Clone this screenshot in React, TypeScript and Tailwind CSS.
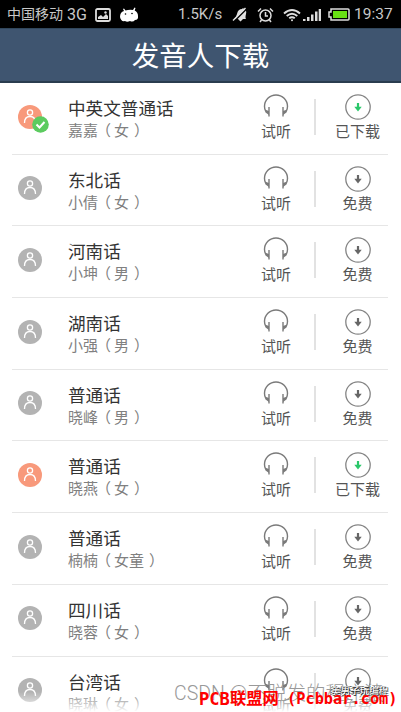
type Voice = {
  name: string
  speaker: string
  gender: string
  active?: boolean
  selected?: boolean
  downloaded?: boolean
}

const voices: Voice[] = [
  { name: '中英文普通话', speaker: '嘉嘉', gender: '女', active: true, selected: true, downloaded: true },
  { name: '东北话', speaker: '小倩', gender: '女' },
  { name: '河南话', speaker: '小坤', gender: '男' },
  { name: '湖南话', speaker: '小强', gender: '男' },
  { name: '普通话', speaker: '晓峰', gender: '男' },
  { name: '普通话', speaker: '晓燕', gender: '女', active: true, downloaded: true },
  { name: '普通话', speaker: '楠楠', gender: '女童' },
  { name: '四川话', speaker: '晓蓉', gender: '女' },
  { name: '台湾话', speaker: '晓琳', gender: '女' },
]

function StatusBar() {
  return (
    <div className="flex h-7 shrink-0 items-center bg-black pl-[7px] pr-2 pt-px text-[15px] text-[#c8c8c8]">
      <span className="flex w-[84px] items-center gap-1 whitespace-nowrap text-[14px]">
        中国移动 <span className="text-[16px]">3G</span>
      </span>
      <svg className="ml-1 h-[14px] w-4" viewBox="0 0 16 14" fill="none">
        <rect x="1" y="1" width="14" height="12" rx="1.5" stroke="#ddd" strokeWidth="1.8" />
        <path d="M3 11V9l3-2 2 2 3-3 2 2v3z" fill="#ddd" />
        <circle cx="10.5" cy="4.5" r="1.2" fill="#ddd" />
      </svg>
      <svg className="ml-2 h-4 w-5" viewBox="0 0 20 16">
        <path
          d="M1 10Q1 5 5 4L4 2l1-.500L6.500 3.500Q10 2.500 14 3L15.500.500l1 .500-.800 2.500Q19 5 19 9q.500 4-3 4-2 2.500-5 1-3 1.500-5 0-4 1-5-4z"
          fill="#fff"
        />
        <circle cx="6.500" cy="7" r=".8" fill="#000" />
        <circle cx="13" cy="6.500" r=".8" fill="#000" />
      </svg>
      <span className="ml-[39px] w-[46px] whitespace-nowrap">1.5K/s</span>
      <svg className="ml-[8px] h-[15px] w-4" viewBox="0 0 16 15">
        <path d="M2 12q2-1 3-5 1-5 5-5l1-1 1 1q3 1 2 5-1 4 0 5zM6 12h5l-2.500 2.500z" fill="#e0e0e0" />
        <path d="M2 14.500 15 1.500" stroke="#000" strokeWidth="1.500" />
        <path d="M1 13.500 13.500 1" stroke="#e0e0e0" strokeWidth="1.500" />
      </svg>
      <svg className="ml-[9px] h-4 w-[17px]" viewBox="0 0 17 16" fill="none" stroke="#ddd" strokeWidth="1.500">
        <circle cx="8.500" cy="8.500" r="5.500" />
        <path d="M8.500 5v4H11M1 4.500 4 1.500M16 4.500l-3-3M4.500 13 3 15M12.500 13l1.500 2" />
      </svg>
      <svg className="ml-[9px] h-[14px] w-[18px]" viewBox="0 0 18 14" fill="none" stroke="#ddd" strokeWidth="1.900">
        <path d="M1 5.500q8-7 16 0M3.700 8q5.300-4.500 10.600 0M6.200 10.300q2.800-2.300 5.600 0" />
        <circle cx="9" cy="12.300" r="1" fill="#ddd" stroke="none" />
      </svg>
      <svg className="ml-[2px] h-[14px] w-[18px]" viewBox="0 0 18 14" fill="#ddd">
        <path d="M0 11h2.500v2H0zM4 9h2.500v4H4zM8 6.500h2.500V13H8zM12 3.500h2.500V13H12zM15.700 1H18v12h-2.300z" />
      </svg>
      <svg className="ml-[7px] h-[13px] w-[22px]" viewBox="0 0 22 13">
        <path d="M3 1h17q1 0 1 1v9q0 1-1 1H3V9H1V4h2z" fill="none" stroke="#ddd" strokeWidth="1.500" />
        <path d="M5 3h14v7H5z" fill="#68df14" />
      </svg>
      <span className="ml-[4px] whitespace-nowrap text-[15.500px]">19:37</span>
    </div>
  )
}

function Avatar({ active, selected }: { active?: boolean; selected?: boolean }) {
  return (
    <div className="relative h-6 w-6">
      <svg className="h-6 w-6" viewBox="0 0 24 24" fill="none">
        <circle cx="12" cy="12" r="12" fill={active ? '#f8997b' : '#b3b3b3'} />
        <circle cx="12" cy="7.500" r="2.600" stroke="#fff" strokeWidth="1.300" />
        <path d="M6.500 18q0-6.500 5.500-6.500t5.500 6.500" stroke="#fff" strokeWidth="1.300" />
      </svg>
      {selected && (
        <svg className="absolute left-[14px] top-[11px] h-[17px] w-[17px]" viewBox="0 0 17 17">
          <circle cx="8.500" cy="8.500" r="8.300" fill="#5ccb5f" />
          <path d="m4.500 8.500 3 3 5-5.500" fill="none" stroke="#fff" strokeWidth="2" />
        </svg>
      )}
    </div>
  )
}

function HeadphonesIcon() {
  return (
    <svg className="h-[26px] w-[26px]" viewBox="0 0 26 26" fill="none" stroke="#7a7a7a" strokeWidth="1.400">
      <path d="M2.800 17.500Q1.500 15 1.500 12.500a11.500 11.500 0 0 1 23 0Q24.500 15 23.200 17.500" />
      <path d="M6 13v9.500M20 13v9.500" />
      <path d="M1.800 15.500 6 17v4L2.500 18.500zM24.200 15.500 20 17v4L23.500 18.500z" fill="#7a7a7a" stroke="none" />
    </svg>
  )
}

function DownloadIcon({ done }: { done?: boolean }) {
  const color = done ? '#2ac76a' : '#666'
  return (
    <svg className="h-[26px] w-[26px]" viewBox="0 0 26 26" fill="none">
      <circle cx="13" cy="13" r="12.200" stroke="#858585" strokeWidth="1.300" />
      <path d="M13 9v5" stroke={color} strokeWidth="2.200" />
      <path d="M9.300 12.800h7.400L13 17.500z" fill={color} />
    </svg>
  )
}

function VoiceRow({ voice }: { voice: Voice }) {
  return (
    <li className="ml-3 mr-[13px] flex h-[71.700px] shrink-0 border-b border-[#e6e6e6]">
      <div className="w-14 pl-[6px] pt-[21.500px]">
        <Avatar active={voice.active} selected={voice.selected} />
      </div>
      <div className="flex-1 pt-[14px]">
        <div className="text-[17.600px] leading-[24px] text-[#333]">{voice.name}</div>
        <div className="whitespace-nowrap text-[15px] leading-[20.500px] text-[#808080]">
          {voice.speaker}
          <span className="-ml-[2px] mr-[3px]">（</span>
          {voice.gender}
          <span className="ml-[5px]">）</span>
        </div>
      </div>
      <div className="flex w-[76px] flex-col items-center pt-[11px]">
        <HeadphonesIcon />
        <span className="pt-px text-[15px] leading-[22px] text-[#555]">试听</span>
      </div>
      <div className="mt-4 h-9 w-[2px] bg-[#e2e2e2]" />
      <div className="flex w-[72px] flex-col items-center pl-[11px] pt-[11px]">
        <DownloadIcon done={voice.downloaded} />
        <span className="whitespace-nowrap pt-px text-[15px] leading-[22px] text-[#555]">
          {voice.downloaded ? '已下载' : '免费'}
        </span>
      </div>
    </li>
  )
}

export default function App() {
  return (
    <div className="relative flex h-[712px] w-[401px] flex-col overflow-hidden bg-white font-['Roboto','Noto_Sans_CJK_SC',sans-serif]">
      <StatusBar />
      <header className="flex h-[55px] shrink-0 items-center justify-center border-b-2 border-t border-b-[#2a3d4f] border-t-[#31475c] bg-[#3f5570] pt-[3px] text-[27.500px] text-white">
        发音人下载
      </header>
      <ul className="flex flex-col">
        {voices.map((voice, i) => (
          <VoiceRow key={i} voice={voice} />
        ))}
      </ul>
      <div className="absolute bottom-0 left-0 h-5 w-full bg-linear-to-b from-white/0 to-white" />
      <div className="absolute left-[174px] top-[681px] whitespace-nowrap text-[19.500px] font-light leading-[26px] text-[#999]">
        CSDN @不脱发的程序猿
      </div>
      <div className="absolute left-[331px] top-[683px] whitespace-nowrap text-[9.500px] leading-[16px] text-white [text-shadow:1px_1px_0_#222,-1px_0_0_#333]">
        美男子玩编程
      </div>
      <div className="absolute left-[199px] top-[687px] flex whitespace-nowrap font-['DejaVu_Sans_Mono','Noto_Sans_CJK_SC',monospace] text-[15.300px] font-bold leading-[24px] text-[#f00]">
        <span className="w-[31px] text-[17px]">PCB</span>
        <span className="w-[57px] text-[16.300px]">联盟网</span>
        <span>(Pcbbar.com)</span>
      </div>
    </div>
  )
}
